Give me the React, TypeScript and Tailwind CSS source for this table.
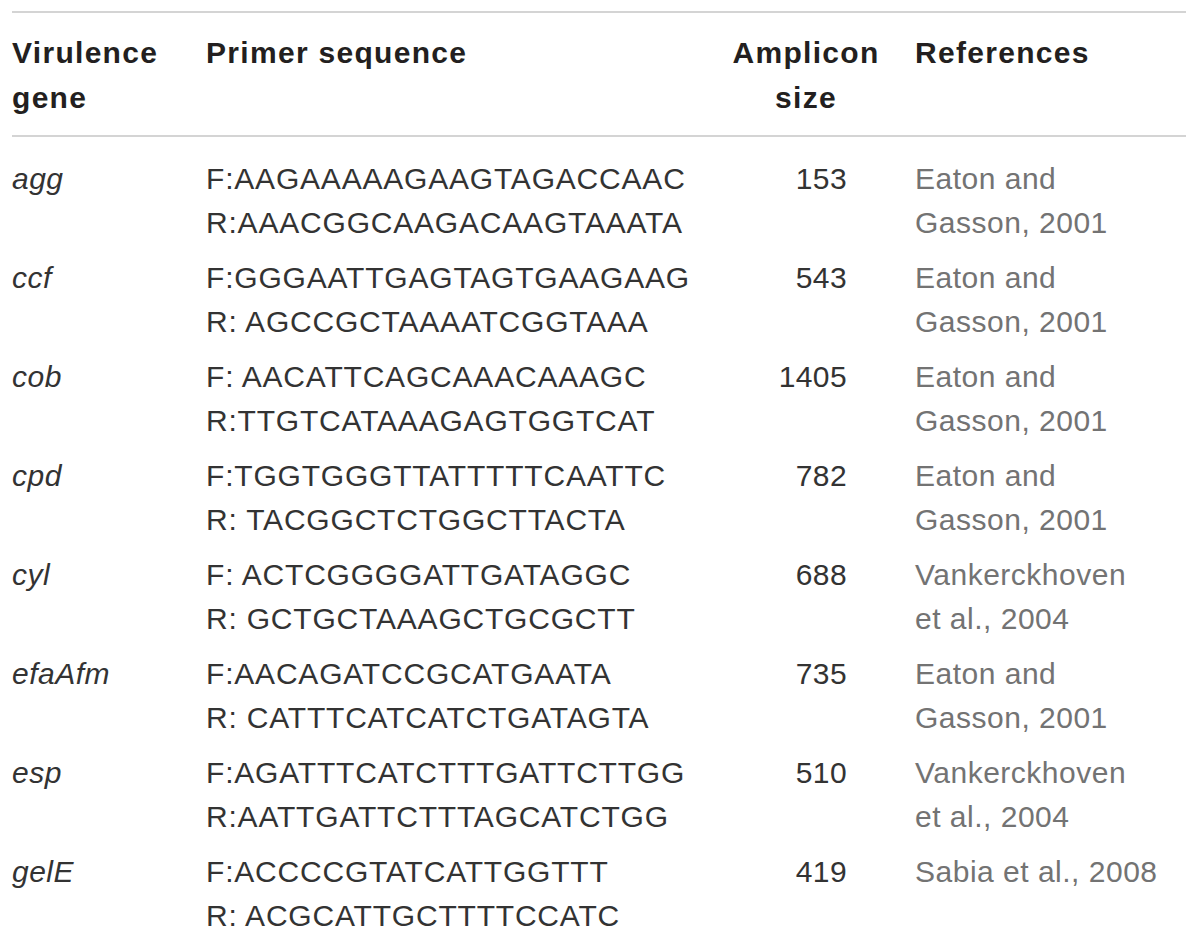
const rows = [
  { gene: "agg", f: "F:AAGAAAAAGAAGTAGACCAAC", r: "R:AAACGGCAAGACAAGTAAATA", size: "153", ref: ["Eaton and", "Gasson, 2001"] },
  { gene: "ccf", f: "F:GGGAATTGAGTAGTGAAGAAG", r: "R: AGCCGCTAAAATCGGTAAA", size: "543", ref: ["Eaton and", "Gasson, 2001"] },
  { gene: "cob", f: "F: AACATTCAGCAAACAAAGC", r: "R:TTGTCATAAAGAGTGGTCAT", size: "1405", ref: ["Eaton and", "Gasson, 2001"] },
  { gene: "cpd", f: "F:TGGTGGGTTATTTTTCAATTC", r: "R: TACGGCTCTGGCTTACTA", size: "782", ref: ["Eaton and", "Gasson, 2001"] },
  { gene: "cyl", f: "F: ACTCGGGGATTGATAGGC", r: "R: GCTGCTAAAGCTGCGCTT", size: "688", ref: ["Vankerckhoven", "et al., 2004"] },
  { gene: "efaAfm", f: "F:AACAGATCCGCATGAATA", r: "R: CATTTCATCATCTGATAGTA", size: "735", ref: ["Eaton and", "Gasson, 2001"] },
  { gene: "esp", f: "F:AGATTTCATCTTTGATTCTTGG", r: "R:AATTGATTCTTTAGCATCTGG", size: "510", ref: ["Vankerckhoven", "et al., 2004"] },
  { gene: "gelE", f: "F:ACCCCGTATCATTGGTTT", r: "R: ACGCATTGCTTTTCCATC", size: "419", ref: ["Sabia et al., 2008"] },
];

export default function App() {
  return (
    <div className="min-h-[942px] bg-white font-['Liberation_Sans',Arial,sans-serif] text-[#231f20]">
      <div className="ml-[12px] w-[1174px] pt-[11px]">
        {/* header */}
        <div className="grid grid-cols-[194px_508px_184px_1fr] border-y-2 border-[#d4d4d4] pt-[17px] pb-[15px] text-[30px] leading-[45px] font-bold tracking-[1.3px]">
          <div>
            Virulence
            <br />
            gene
          </div>
          <div>Primer sequence</div>
          <div className="text-center">
            Amplicon
            <br />
            size
          </div>
          <div className="pl-[17px]">References</div>
        </div>

        {/* body */}
        <div className="text-[30px] leading-[44px] tracking-[0.8px] text-[#333]">
          {rows.map((row, i) => (
            <div
              key={row.gene}
              className={
                "grid grid-cols-[194px_508px_184px_1fr] " + (i === 0 ? "pt-[20px]" : "pt-[11px]")
              }
            >
              <div className="italic tracking-[0.5px]">{row.gene}</div>
              <div>
                <div>{row.f}</div>
                <div>{row.r}</div>
              </div>
              <div className="pr-[51px] text-right tracking-[0.4px]">{row.size}</div>
              <div className="pl-[17px] text-[#737373] tracking-[0.5px]">
                {row.ref.map((line) => (
                  <div key={line}>{line}</div>
                ))}
              </div>
            </div>
          ))}
        </div>
      </div>
    </div>
  );
}
